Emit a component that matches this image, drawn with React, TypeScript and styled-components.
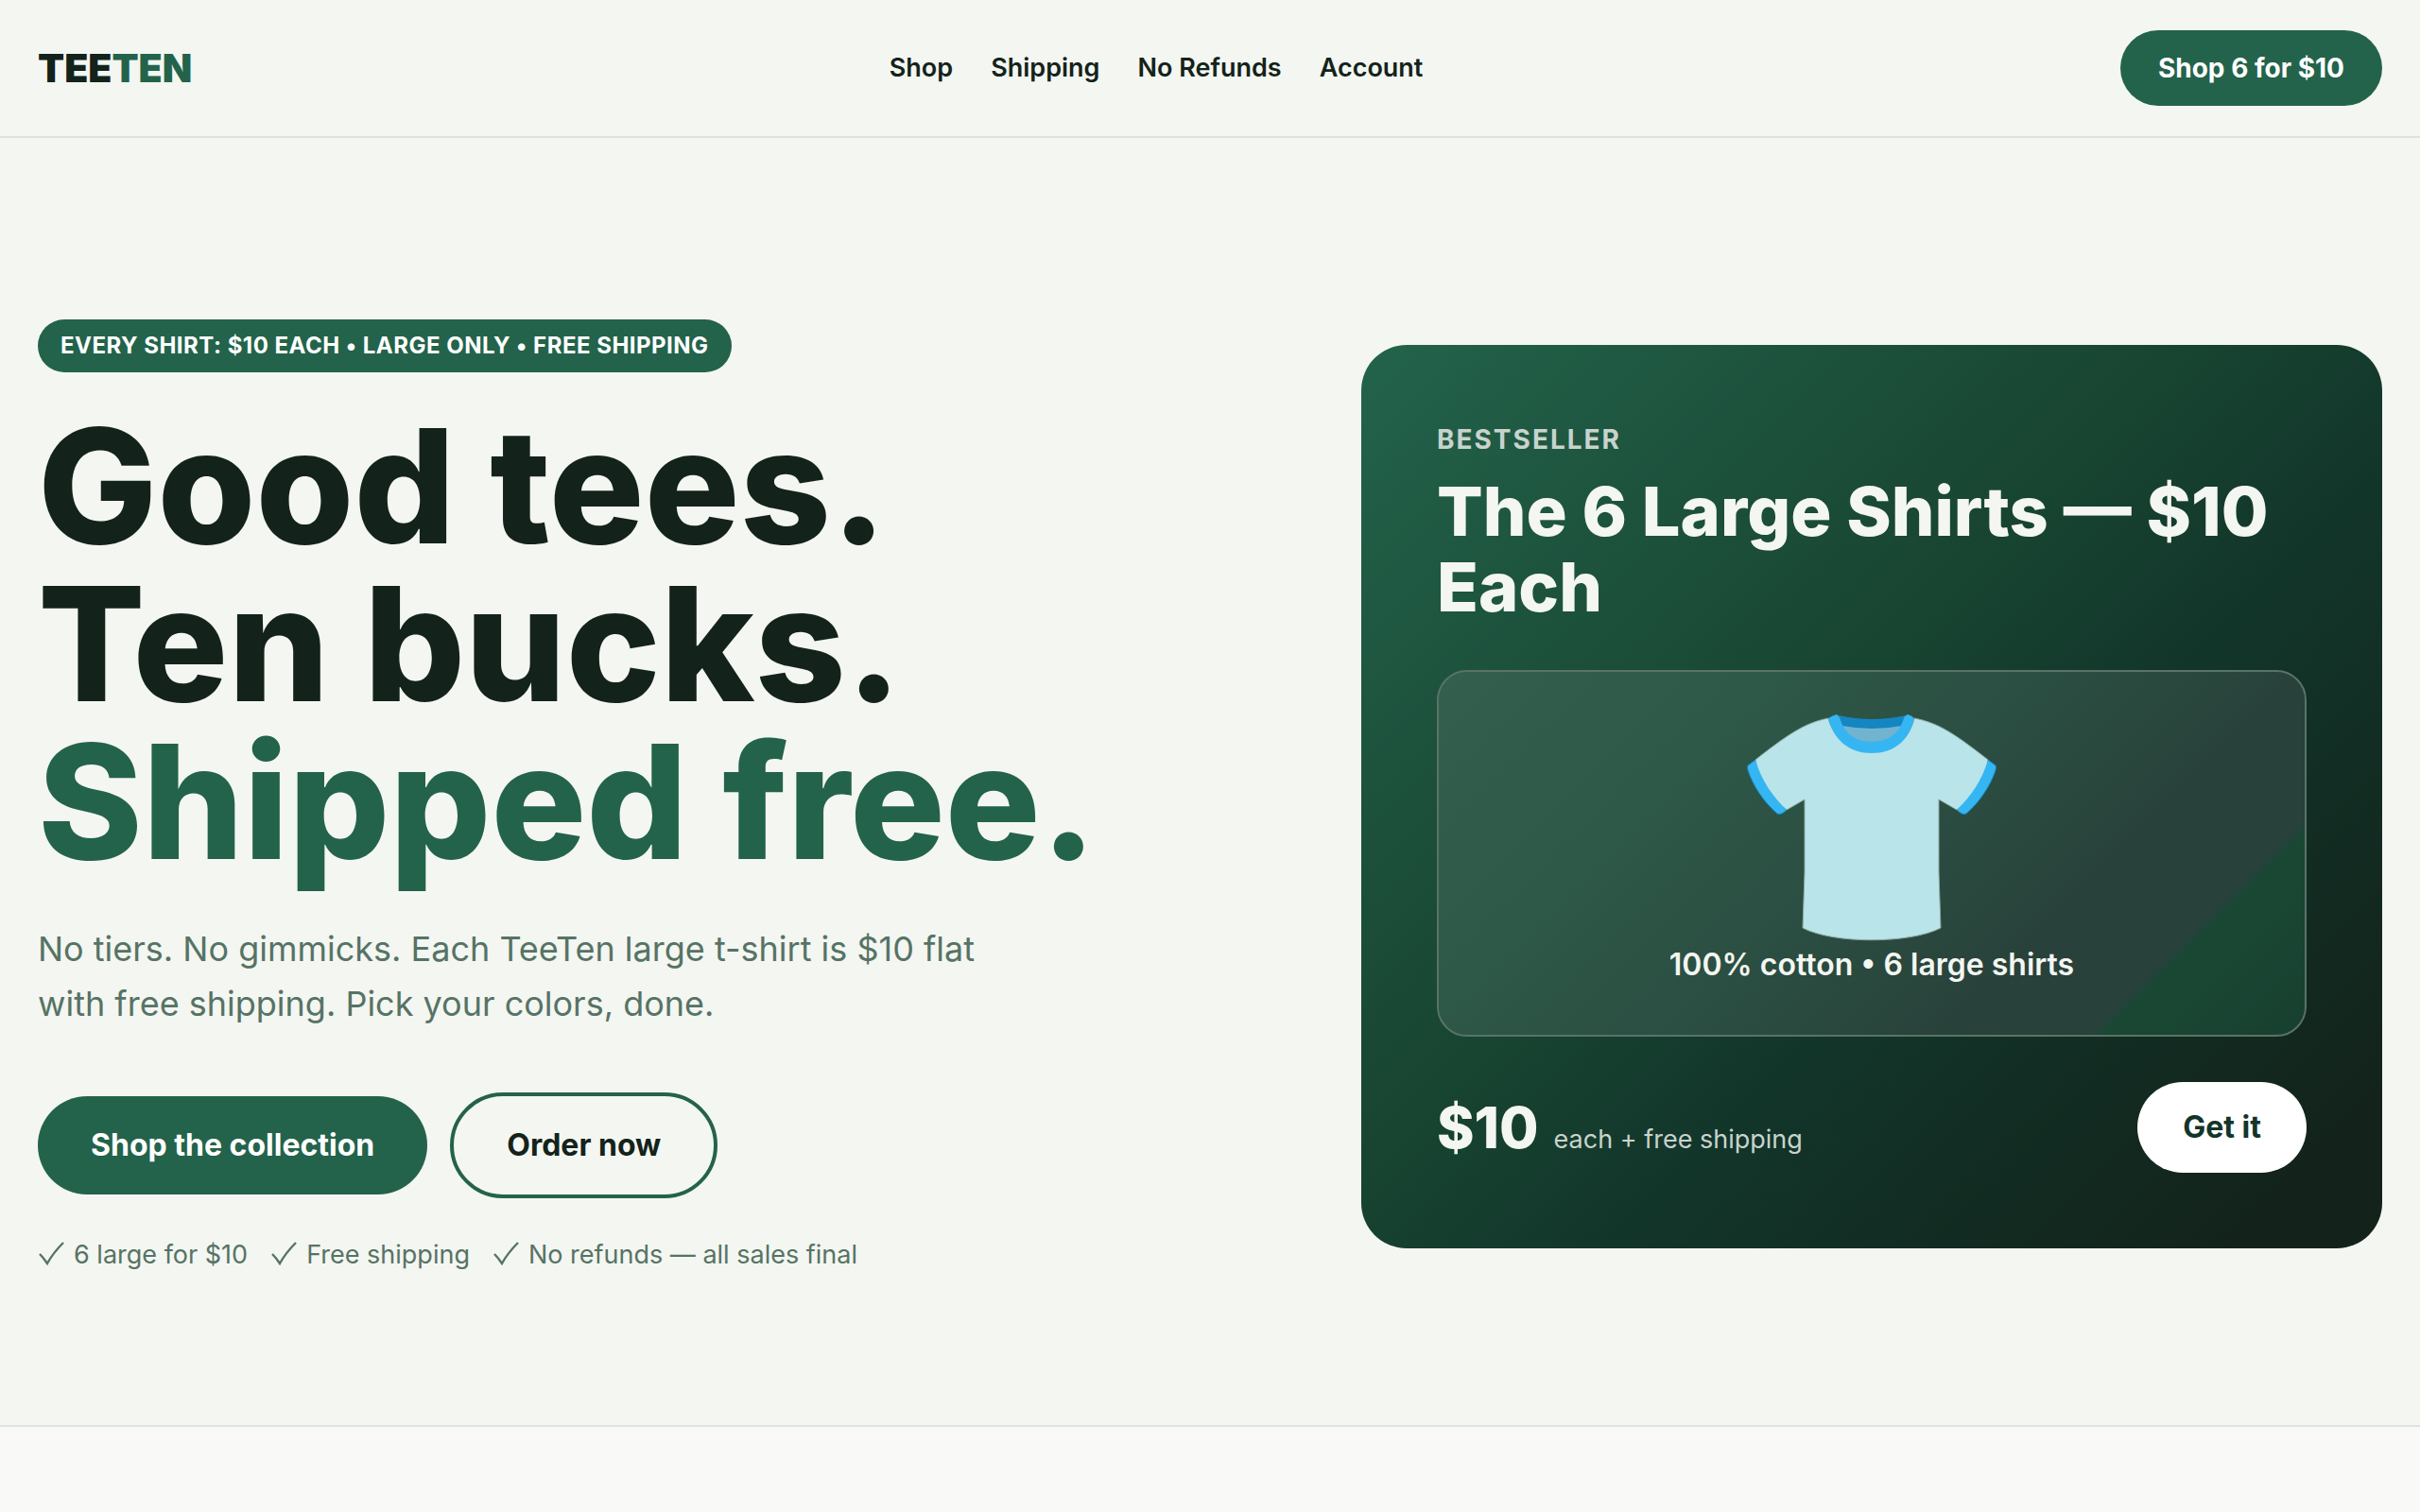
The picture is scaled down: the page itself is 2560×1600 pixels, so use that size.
import React from "react";
import styled, { createGlobalStyle } from "styled-components";

const ink = "#13231b";
const forest = "#12352a";
const green = "#23634b";
const muted = "#567365";
const mist = "#c8d3cd";
const paper = "#f4f6f1";

const Global = createGlobalStyle`
  *, *::before, *::after { box-sizing: border-box; }
  body { margin: 0; background: #f9f9f7; color: ${ink}; font-family: Inter, "Liberation Sans", sans-serif; }
  h1, h2, p, ul { margin: 0; padding: 0; }
`;

const Header = styled.header`
  display: flex;
  align-items: center;
  justify-content: space-between;
  padding: 32px 40px;
  background: ${paper};
  border-bottom: 2px solid #dee3da;
`;

const Logo = styled.a`
  font-size: 41px;
  line-height: 48px;
  font-weight: 900;
  color: ${ink};
  text-decoration: none;

  span { color: ${green}; }
`;

const Nav = styled.nav`
  display: flex;
  gap: 40px;
`;

const NavLink = styled.a`
  font-size: 27px;
  line-height: 40px;
  font-weight: 600;
  color: ${ink};
  text-decoration: none;
`;

const Button = styled.button<{ $kind: "small" | "primary" | "outline" | "light" }>`
  padding: 32px 56px;
  border: 0;
  border-radius: 100px;
  background: ${green};
  color: #fff;
  font-family: inherit;
  font-size: 32px;
  line-height: 40px;
  font-weight: 700;
  white-space: nowrap;
  cursor: pointer;
  ${p => p.$kind === "small" && `font-size: 28px; padding: 20px 40px;`}
  ${p => p.$kind === "outline" && `background: transparent; color: ${ink}; border: 4px solid ${green};`}
  ${p => p.$kind === "light" && `background: #fff; color: ${forest}; padding: 28px 48px;`}
`;

const Hero = styled.section`
  display: grid;
  grid-template-columns: 11fr 9fr;
  gap: 80px;
  align-items: center;
  padding: 192px 40px 160px;
  background: ${paper};
  border-bottom: 2px solid #dee5dc;
`;

const Intro = styled.div`
  display: flex;
  flex-direction: column;
  align-items: flex-start;
`;

const Badge = styled.p`
  padding: 12px 24px;
  border-radius: 28px;
  background: ${green};
  color: #fff;
  font-size: 24px;
  line-height: 32px;
  font-weight: 700;
  letter-spacing: 0.02em;
`;

const Headline = styled.h1`
  margin-top: 37px;
  font-size: 168px;
  line-height: 167px;
  font-weight: 800;
`;

const HeadlineRow = styled.span<{ $accent?: boolean }>`
  display: block;
  color: ${p => (p.$accent ? green : ink)};
`;

const Lead = styled.p`
  margin-top: 43px;
  max-width: 1040px;
  color: ${muted};
  font-size: 36px;
  line-height: 58px;
`;

const Actions = styled.div`
  display: flex;
  align-items: center;
  gap: 24px;
  margin-top: 65px;
`;

const Perks = styled.ul`
  display: flex;
  gap: 24px;
  margin-top: 40px;
  list-style: none;
  color: ${muted};
`;

const Perk = styled.li`
  display: flex;
  align-items: center;
  gap: 10px;
  font-size: 27px;
  line-height: 40px;

  svg { width: 28px; height: 28px; }
`;

const Card = styled.article`
  padding: 80px;
  border-radius: 48px;
  color: ${paper};
  background: linear-gradient(135deg, ${green} 0%, #184532 42%, ${forest} 60%, ${ink} 92%);
`;

const Eyebrow = styled.p`
  font-size: 28px;
  line-height: 40px;
  font-weight: 700;
  letter-spacing: 2px;
  color: ${mist};
`;

const CardTitle = styled.h2`
  margin-top: 16px;
  font-size: 72px;
  line-height: 80px;
  font-weight: 800;
`;

const Panel = styled.div`
  display: flex;
  flex-direction: column;
  align-items: center;
  margin-top: 48px;
  padding: 42px 0 50px;
  border: 2px solid #5a7367;
  border-radius: 32px;
  background: linear-gradient(135deg, #345f4e 0%, #2e5948 25%, #2b4e42 50%, #28413a 72%, #28413a 83%, #1a4835 83%, #183f2f 100%) padding-box;

  svg { width: 268px; height: 244px; }
`;

const Caption = styled.p`
  font-size: 32px;
  line-height: 48px;
  font-weight: 600;
`;

const Foot = styled.div`
  display: flex;
  justify-content: space-between;
  align-items: center;
  margin-top: 48px;
`;

const Price = styled.p`
  display: flex;
  align-items: baseline;
  gap: 16px;
  font-size: 60px;
  line-height: 72px;
  font-weight: 800;

  small { font-size: 27px; line-height: 40px; font-weight: 400; color: ${mist}; }
`;

const Check = () => (
  <svg viewBox="0 0 28 28" fill="none" stroke="currentColor" aria-hidden="true">
    <path d="M2 13 Q6 17 10 23 Q16 12 27 1" strokeWidth="2.4" />
  </svg>
);

const Shirt = () => (
  <svg viewBox="0 0 268 244" role="img" aria-label="T-shirt">
    {/* inside of the collar */}
    <path d="M99 5 Q134 12 170 5 L164 22 Q134 44 104 22Z" fill="#72b3cf" />
    <path d="M99 4 Q134 12 170 4 L166 15 Q134 21 103 15Z" fill="#1486c2" />
    {/* body and sleeves */}
    <path
      d="M88 7 C64 12 48 22 11 51 C14 74 24 90 44 104 L63 93 V170 L61 229 C94 246 174 246 207 229 L205 170 V93 L224 104 C244 90 254 74 257 51 C220 22 204 12 179 7 C174 29 157 40 134 40 C111 40 94 29 88 7Z"
      fill="#b8e4ea"
      stroke="#8fa79f"
      strokeWidth="1"
      strokeLinejoin="round"
    />
    {/* neckband */}
    <path d="M88 7 Q93 4 97 3 Q99 4 100 7 C105 23 116 32 134 32 C152 32 163 23 168 7 Q169 4 172 3 Q176 4 179 7 C174 31 157 44 134 44 C111 44 94 31 88 7Z" fill="#35b6f2" />
    {/* cuffs */}
    <path d="M11 51 L3 57 Q2 59 3 62 C8 78 20 96 34 108 Q38 110 44 104 C29 90 17 72 11 51Z" fill="#35b6f2" />
    <path d="M257 51 L265 57 Q266 59 265 62 C260 78 248 96 234 108 Q230 110 224 104 C239 90 251 72 257 51Z" fill="#35b6f2" />
    <path d="M11 51 L3 57 Q2 59 3 62 C8 78 20 96 34 108 Q38 110 44 104 M257 51 L265 57 Q266 59 265 62 C260 78 248 96 234 108 Q230 110 224 104" fill="none" stroke="#1486c2" strokeWidth="1" />
  </svg>
);

const links = [
  { label: "Shop", href: "#shop" },
  { label: "Shipping", href: "#shipping" },
  { label: "No Refunds", href: "#refunds" },
  { label: "Account", href: "#account" },
];

const perks = ["6 large for $10", "Free shipping", "No refunds — all sales final"];

export default function App() {
  return (
    <>
      <Global />
      <Header>
        <Logo href="#">TEE<span>TEN</span></Logo>
        <Nav>
          {links.map(link => <NavLink key={link.href} href={link.href}>{link.label}</NavLink>)}
        </Nav>
        <Button $kind="small">Shop 6 for $10</Button>
      </Header>
      <main>
        <Hero>
          <Intro>
            <Badge>EVERY SHIRT: $10 EACH • LARGE ONLY • FREE SHIPPING</Badge>
            <Headline>
              <HeadlineRow>Good tees.</HeadlineRow>
              <HeadlineRow>Ten bucks.</HeadlineRow>
              <HeadlineRow $accent>Shipped free.</HeadlineRow>
            </Headline>
            <Lead>No tiers. No gimmicks. Each TeeTen large t-shirt is $10 flat with free shipping. Pick your colors, done.</Lead>
            <Actions>
              <Button $kind="primary">Shop the collection</Button>
              <Button $kind="outline">Order now</Button>
            </Actions>
            <Perks>
              {perks.map(perk => <Perk key={perk}><Check />{perk}</Perk>)}
            </Perks>
          </Intro>
          <Card>
            <Eyebrow>BESTSELLER</Eyebrow>
            <CardTitle>The 6 Large Shirts — $10 Each</CardTitle>
            <Panel>
              <Shirt />
              <Caption>100% cotton • 6 large shirts</Caption>
            </Panel>
            <Foot>
              <Price>$10 <small>each + free shipping</small></Price>
              <Button $kind="light">Get it</Button>
            </Foot>
          </Card>
        </Hero>
      </main>
    </>
  );
}
